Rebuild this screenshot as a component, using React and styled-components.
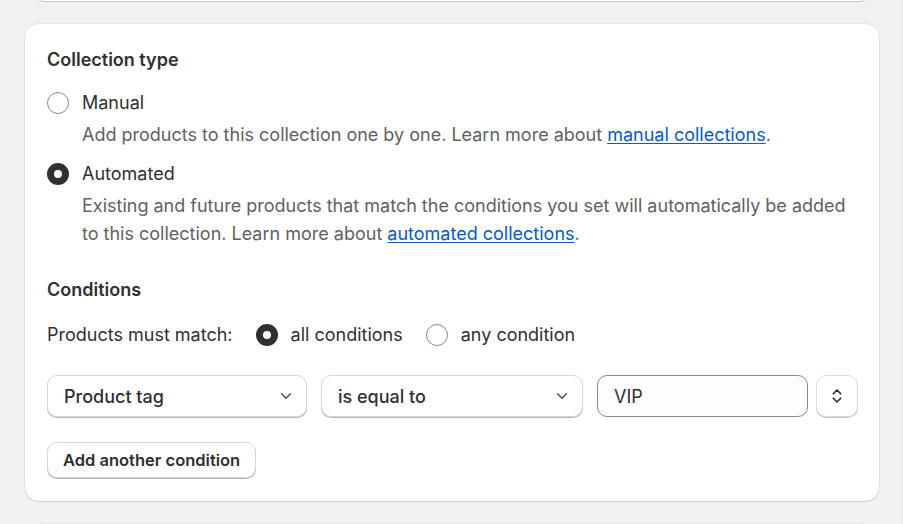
import React from 'react'
import styled, { createGlobalStyle } from 'styled-components'
import { ChevronDown, ChevronsUpDown } from 'lucide-react'

const GlobalStyle = createGlobalStyle`
    html, body {
        margin: 0;
        padding: 0;
        background: #f1f1f1;
    }
    body {
        font-family: Inter, "Noto Sans", sans-serif;
        color: #303030;
        -webkit-font-smoothing: antialiased;
    }
`

const Page = styled.div`
    width: 903px;
    height: 524px;
    overflow: hidden;
    box-sizing: border-box;
    padding: 0 23px 0 25px;
    display: flex;
    flex-direction: column;
    gap: 23px;
    border-right: 1px solid #e6e6e6;
`

const Card = styled.section`
    flex-shrink: 0;
    background: #fff;
    border-radius: 14px;
    box-shadow: 0 1px 1px rgba(0, 0, 0, 0.13), 0 0 0 1px rgba(0, 0, 0, 0.05);
    box-sizing: border-box;
    margin: ${p => (p.$stub ? '0 9px' : '0')};
    height: ${p => (p.$stub ? '21px' : 'auto')};
    padding: ${p => (p.$stub ? '0' : '23px 21px 23px 22px')};
`

const TopStub = styled(Card)`
    margin-top: -20px;
`

const Heading = styled.h2`
    margin: 0;
    font-size: 18px;
    line-height: 26px;
    font-weight: 600;
    color: #303030;
    margin-top: ${p => p.$top || 0}px;
`

const Options = styled.div`
    display: flex;
    flex-direction: column;
    gap: 11px;
    margin-top: 16px;
`

const Option = styled.div`
    display: flex;
    flex-direction: column;
    gap: 4px;
`

const Row = styled.label`
    display: flex;
    align-items: center;
    gap: 13px;
    font-size: 18px;
    line-height: 28px;
    color: #303030;
`

const Radio = styled.span`
    width: 22px;
    height: 22px;
    box-sizing: border-box;
    border-radius: 50%;
    flex-shrink: 0;
    background: #fff;
    border: ${p => (p.$checked ? '7px solid #303030' : '1px solid #8a8a8a')};
`

const Help = styled.p`
    margin: 0 0 0 35px;
    font-size: 18px;
    line-height: 28px;
    color: #616161;
`

const Link = styled.a`
    color: #005bd3;
    text-decoration: underline;
    text-underline-offset: 2px;
`

const MatchLine = styled.div`
    display: flex;
    align-items: center;
    margin-top: 18px;
    font-size: 18px;
    line-height: 28px;
`

const MatchLabel = styled.span`
    margin-right: 23px;
`

const MatchChoice = styled(Row)`
    margin-right: 23px;
`

const Fields = styled.div`
    display: flex;
    gap: 14px;
    margin-top: 26px;
`

const ValueGroup = styled.div`
    display: flex;
    gap: 8px;
    flex: 1;
`

const Select = styled.div`
    width: ${p => p.$width}px;
    height: 42px;
    box-sizing: border-box;
    display: flex;
    align-items: center;
    justify-content: space-between;
    padding: 0 11px 0 16px;
    border-radius: 10px;
    border: 1px solid #d6d6d6;
    box-shadow: 0 1px 0 #b5b5b5;
    background: #fff;
    font-size: 18px;
    font-weight: 500;
    color: #303030;
    svg {
        color: #4a4a4a;
    }
`

const Input = styled.div`
    flex: 1;
    height: 42px;
    box-sizing: border-box;
    display: flex;
    align-items: center;
    padding: 0 16px;
    border-radius: 10px;
    border: 1px solid #8a8a8a;
    background: #fdfdfd;
    font-size: 18px;
    color: #303030;
`

const IconButton = styled.button`
    height: 42px;
    width: 42px;
    padding: 0;
    display: flex;
    align-items: center;
    justify-content: center;
    border-radius: 10px;
    border: 1px solid #dcdcdc;
    box-shadow: 0 1px 0 #c4c4c4;
    background: #fff;
    color: #303030;
`

const Button = styled.button`
    margin-top: 25px;
    height: 36px;
    padding: 0 15px;
    border-radius: 10px;
    border: 1px solid #d6d6d6;
    box-shadow: 0 1px 0 #b5b5b5;
    background: #fff;
    font-family: Inter, "Noto Sans", sans-serif;
    font-size: 16.5px;
    font-weight: 600;
    color: #303030;
`

export default function App() {
    return (
        <>
            <GlobalStyle />
            <Page>
                <TopStub $stub />
                <Card>
                    <Heading>Collection type</Heading>
                    <Options>
                        <Option>
                            <Row><Radio />Manual</Row>
                            <Help>
                                Add products to this collection one by one. Learn more about{' '}
                                <Link href="#">manual collections</Link>.
                            </Help>
                        </Option>
                        <Option>
                            <Row><Radio $checked />Automated</Row>
                            <Help>
                                Existing and future products that match the conditions you set will automatically be added
                                to this collection. Learn more about <Link href="#">automated collections</Link>.
                            </Help>
                        </Option>
                    </Options>

                    <Heading $top={29}>Conditions</Heading>
                    <MatchLine>
                        <MatchLabel>Products must match:</MatchLabel>
                        <MatchChoice><Radio $checked />all conditions</MatchChoice>
                        <MatchChoice><Radio />any condition</MatchChoice>
                    </MatchLine>

                    <Fields>
                        <Select $width={260}>Product tag<ChevronDown size={18} strokeWidth={1.8} /></Select>
                        <Select $width={262}>is equal to<ChevronDown size={18} strokeWidth={1.8} /></Select>
                        <ValueGroup>
                            <Input>VIP</Input>
                            <IconButton><ChevronsUpDown size={18} strokeWidth={2.2} /></IconButton>
                        </ValueGroup>
                    </Fields>

                    <Button>Add another condition</Button>
                </Card>
                <Card $stub />
            </Page>
        </>
    )
}
